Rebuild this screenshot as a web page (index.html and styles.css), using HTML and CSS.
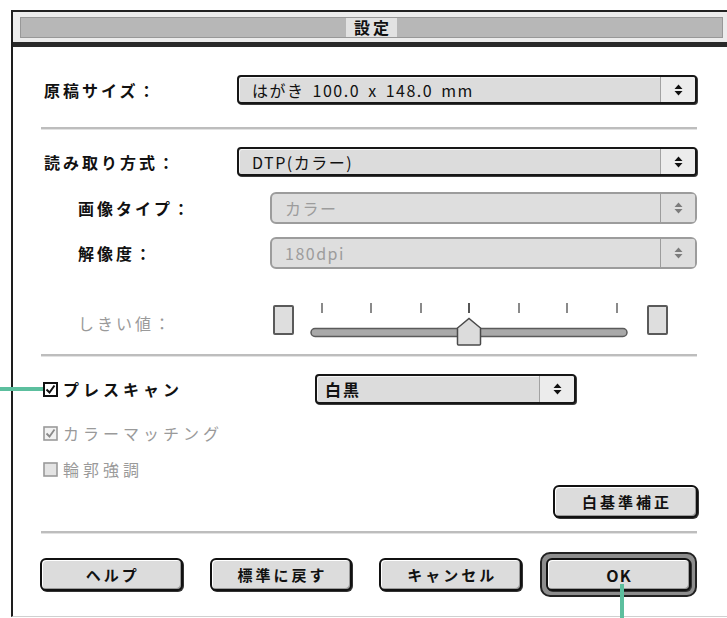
FILE: index.html
```html
<!DOCTYPE html>
<html lang="ja">
<head>
    <meta charset="UTF-8" />
    <title>設定</title>
    <link rel="stylesheet" href="styles.css">
</head>
<body>
<div class="window">
    <div class="titlebar">
        <div class="stripes"><span class="title">設定</span></div>
    </div>

    <div class="panel">
        <div class="row field">
            <span class="label">原稿サイズ：</span>
            <div class="popup">
                <span class="value">はがき 100.0 x 148.0 mm</span>
                <span class="arrows"><svg width="9" height="12" viewBox="0 0 9 12"><path d="M0.5 5 L4.5 0.5 L8.5 5 Z M0.5 7 L4.5 11.5 L8.5 7 Z" /></svg></span>
            </div>
        </div>

        <div class="sep sep-first"></div>

        <div class="row field mode">
            <span class="label">読み取り方式：</span>
            <div class="popup">
                <span class="value">DTP(カラー)</span>
                <span class="arrows"><svg width="9" height="12" viewBox="0 0 9 12"><path d="M0.5 5 L4.5 0.5 L8.5 5 Z M0.5 7 L4.5 11.5 L8.5 7 Z" /></svg></span>
            </div>
        </div>

        <div class="row field sub type">
            <span class="label">画像タイプ：</span>
            <div class="popup disabled">
                <span class="value">カラー</span>
                <span class="arrows"><svg width="9" height="12" viewBox="0 0 9 12"><path d="M0.5 5 L4.5 0.5 L8.5 5 Z M0.5 7 L4.5 11.5 L8.5 7 Z" /></svg></span>
            </div>
        </div>

        <div class="row field sub res">
            <span class="label">解像度：</span>
            <div class="popup disabled">
                <span class="value">180dpi</span>
                <span class="arrows"><svg width="9" height="12" viewBox="0 0 9 12"><path d="M0.5 5 L4.5 0.5 L8.5 5 Z M0.5 7 L4.5 11.5 L8.5 7 Z" /></svg></span>
            </div>
        </div>

        <div class="row sub slider-row">
            <span class="label muted">しきい値：</span>
            <span class="slider-box"></span>
            <svg class="slider" width="340" height="46" viewBox="0 0 340 46">
                <g stroke="#8a8a8a" stroke-width="2">
                    <line x1="22" y1="3" x2="22" y2="13" />
                    <line x1="71" y1="3" x2="71" y2="13" />
                    <line x1="121" y1="3" x2="121" y2="13" />
                    <line x1="169" y1="3" x2="169" y2="13" stroke="#555" />
                    <line x1="219" y1="3" x2="219" y2="13" />
                    <line x1="267" y1="3" x2="267" y2="13" />
                    <line x1="317" y1="3" x2="317" y2="13" />
                </g>
                <rect x="11" y="28.5" width="316" height="8" rx="4" fill="#a9a9a9" stroke="#5a5a5a" stroke-width="1.5" />
                <path d="M157.5 44 L157.5 28 L169 18.5 L180.5 28 L180.5 44 Q180.5 45 179.5 45 L158.5 45 Q157.5 45 157.5 44 Z" fill="#dcdcdc" stroke="#4a4a4a" stroke-width="1.5" />
            </svg>
            <span class="slider-box right"></span>
        </div>

        <div class="sep sep-second"></div>

        <div class="row check-row prescan">
            <div class="check">
                <svg width="15" height="15" viewBox="0 0 15 15"><rect x="1" y="1" width="13" height="13" fill="#fff" stroke="#111" stroke-width="2" /><path d="M3.5 7.5 L6.5 10.5 L11.5 3.5" fill="none" stroke="#111" stroke-width="2" /></svg>
                <span>プレスキャン</span>
            </div>
            <div class="popup small">
                <span class="value strong">白黒</span>
                <span class="arrows"><svg width="9" height="12" viewBox="0 0 9 12"><path d="M0.5 5 L4.5 0.5 L8.5 5 Z M0.5 7 L4.5 11.5 L8.5 7 Z" /></svg></span>
            </div>
        </div>

        <div class="row check-row matching">
            <div class="check off">
                <svg width="15" height="15" viewBox="0 0 15 15"><rect x="1" y="1" width="13" height="13" fill="#f2f2f2" stroke="#9a9a9a" stroke-width="1.6" /><path d="M3.5 7.5 L6.5 10.5 L11.5 3.5" fill="none" stroke="#8a8a8a" stroke-width="1.8" /></svg>
                <span>カラーマッチング</span>
            </div>
        </div>

        <div class="row check-row edge">
            <div class="check off">
                <svg width="15" height="15" viewBox="0 0 15 15"><rect x="1" y="1" width="13" height="13" fill="#e4e4e4" stroke="#9a9a9a" stroke-width="1.6" /></svg>
                <span>輪郭強調</span>
            </div>
        </div>

        <div class="row white-row">
            <button class="btn">白基準補正</button>
        </div>

        <div class="sep sep-third"></div>

        <div class="row buttons">
            <button class="btn">ヘルプ</button>
            <button class="btn">標準に戻す</button>
            <button class="btn">キャンセル</button>
            <div class="default-ring"><button class="btn btn-ok">OK</button></div>
        </div>
    </div>
</div>

<div class="mark mark-left"></div>
<div class="mark mark-bottom"></div>
</body>
</html>
```

FILE: styles.css
```css
html, body {
  margin: 0;
  overflow: hidden;
  background-color: #fff;
}

body {
  font-family: "Noto Sans CJK JP", "Noto Sans", sans-serif;
  color: #111;
}

.window {
  box-sizing: border-box;
  width: 721px;
  height: 607px;
  margin: 10px 0 0 11px;
  border-left: 2px solid #1e1e1e;
  border-right: 2px solid #1e1e1e;
  border-bottom: 1px solid #d0d0d0;
}

/* title bar */
.titlebar {
  border-top: 2px solid #222;
  border-bottom: 5px solid #2a2a2a;
  padding: 5px 7px 4px;
  background-color: #ececec;
}

.stripes {
  box-sizing: border-box;
  height: 21px;
  background-color: #b7b7b7;
  border: 1px solid #989898;
  display: flex;
  justify-content: center;
}

.title {
  background-color: #e2e2e2;
  padding: 0 5px 0 8px;
  font-size: 16px;
  font-weight: bold;
  line-height: 19px;
  letter-spacing: 3px;
}

/* content */
.panel {
  width: 656px;
  padding: 28px 0 0 28px;
}

.row {
  display: flex;
  align-items: center;
}

.label {
  box-sizing: border-box;
  flex: 0 0 196px;
  padding-left: 3px;
  font-size: 16px;
  font-weight: bold;
  letter-spacing: 3px;
}

.sub .label {
  flex-basis: 229px;
  padding-left: 37px;
}

.label.muted {
  color: #9a9a9a;
  font-weight: normal;
}

.mode { margin-top: 17px; }
.type { margin-top: 16px; }
.res { margin-top: 13px; }

/* popup menus */
.popup {
  flex: 1;
  box-sizing: border-box;
  height: 29px;
  display: flex;
  border: 2px solid #161616;
  border-radius: 4px;
  background-color: #dcdcdc;
  box-shadow: inset 1px 1px 0 #f4f4f4, 1px 1px 0 #3a3a3a;
}

.popup .value {
  flex: 1;
  display: flex;
  align-items: center;
  padding-left: 13px;
  font-size: 16px;
  letter-spacing: 1.5px;
  word-spacing: 3px;
}

.popup .value.strong {
  font-weight: bold;
  padding-left: 8px;
  letter-spacing: 2px;
}

.popup .arrows {
  width: 34px;
  display: flex;
  align-items: center;
  justify-content: center;
  border-left: 1px solid #a2a2a2;
  background-color: #ececec;
  border-radius: 0 2px 2px 0;
}

.arrows svg {
  fill: #111;
}

.popup.disabled {
  height: 32px;
  border: 2px solid #9c9c9c;
  border-radius: 6px;
  background-color: #dedede;
  box-shadow: none;
}

.popup.disabled .value {
  color: #9c9c9c;
}

.popup.disabled .arrows {
  background-color: #dedede;
  border-left-color: #9c9c9c;
}

.popup.disabled .arrows svg {
  fill: #7c7c7c;
}

.popup.small {
  flex: 0 0 261px;
  height: 30px;
}

/* threshold slider */
.slider-row {
  align-items: flex-start;
  margin-top: 31px;
}

.slider-row .label {
  margin-top: 14px;
  line-height: 18px;
}

.slider-box {
  box-sizing: border-box;
  width: 21px;
  height: 30px;
  margin: 5px 0 0 3px;
  border: 2px solid #5a5a5a;
  border-radius: 2px;
  background-color: #dedede;
}

.slider {
  margin-left: 6px;
}

.slider-box.right {
  margin-left: 7px;
}

/* separators */
.sep {
  height: 2px;
  background-color: #bdbdbd;
  border-bottom: 1px solid #e2e2e2;
}

.sep-first { margin-top: 23px; }
.sep-second { margin-top: 8px; }
.sep-third { margin-top: 13px; }

/* checkboxes */
.check-row {
  height: 26px;
}

.check {
  flex: 0 0 272px;
  display: flex;
  align-items: center;
  gap: 5px;
  margin-left: 2px;
  font-size: 16px;
  font-weight: bold;
  letter-spacing: 4px;
}

.check.off {
  color: #9a9a9a;
  font-weight: normal;
}

.prescan {
  height: 30px;
  margin-top: 17px;
}

.matching { margin-top: 16px; }
.edge { margin-top: 10px; }

/* buttons */
.btn {
  box-sizing: border-box;
  width: 145px;
  height: 33px;
  padding: 0;
  border: 2px solid #111;
  border-radius: 6px;
  background-color: #dcdcdc;
  box-shadow: inset 1px 1px 0 #fff, inset -1px -1px 0 #9a9a9a, 1px 1px 0 #333;
  color: #111;
  font-family: inherit;
  font-size: 15px;
  font-weight: bold;
  letter-spacing: 3px;
  text-indent: 3px;
}

.btn-ok {
  font-size: 16px;
  letter-spacing: 1px;
  text-indent: 1px;
}

.white-row {
  justify-content: flex-end;
  margin: 3px -1px 0 0;
}

.buttons {
  height: 45px;
  margin: 18px 0 0 -1px;
  gap: 27px;
}

.default-ring {
  margin-left: -9px;
  padding: 4px;
  border: 2px solid #222;
  border-radius: 10px;
  background-color: #8d8d8d;
  display: flex;
}

/* annotation lines */
.mark {
  position: absolute;
  background-color: #5cbf9e;
}

.mark-left {
  left: 0;
  top: 387px;
  width: 43px;
  height: 4px;
}

.mark-bottom {
  left: 620px;
  top: 584px;
  width: 4px;
  height: 34px;
}
```
